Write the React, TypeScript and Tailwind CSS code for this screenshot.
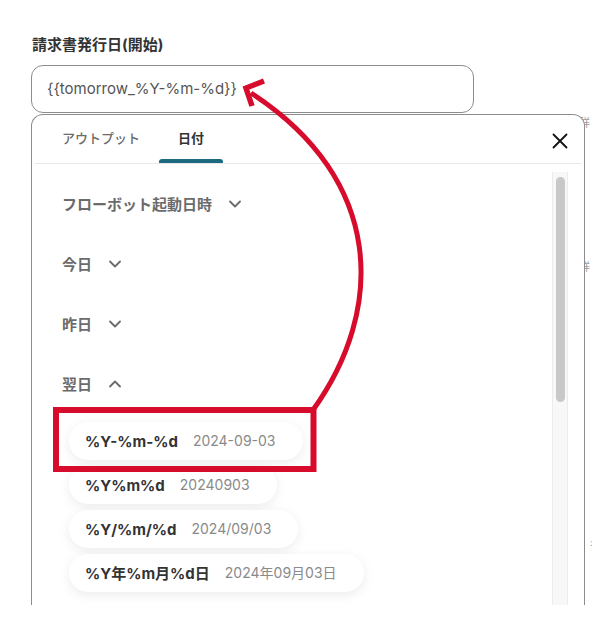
import React from "react";

const font = { fontFamily: 'Inter, "Noto Sans CJK JP", sans-serif' };

function Chevron({ up = false }: { up?: boolean }) {
  return (
    <svg width="12" height="8" viewBox="0 0 12 8" className="shrink-0">
      <path
        d={up ? "M1 6.5 L6 1.5 L11 6.5" : "M1 1.5 L6 6.5 L11 1.5"}
        fill="none"
        stroke="#6b6b6b"
        strokeWidth="1.8"
        strokeLinecap="round"
        strokeLinejoin="round"
      />
    </svg>
  );
}

function Section({ label, up = false }: { label: string; up?: boolean }) {
  return (
    <div className="h-[60px] flex items-center gap-[17px] pl-[30px]">
      <span className="text-[15px] font-semibold text-[#6b6b6b] leading-none">{label}</span>
      <Chevron up={up} />
    </div>
  );
}

function Pill({ fmt, ex }: { fmt: string; ex: string }) {
  return (
    <div className="self-start h-[38px] flex items-center gap-[15px] pl-[16px] pr-[27px] rounded-full bg-white shadow-[0_3px_12px_rgba(0,0,0,0.08)]">
      <span className="text-[15px] font-bold text-[#333333] leading-none">{fmt}</span>
      <span className="text-[14px] text-[#8a8a8a] leading-none">{ex}</span>
    </div>
  );
}

export default function App() {
  return (
    <div className="relative w-[610px] h-[629px] overflow-hidden bg-white" style={font}>
      {/* background fragments peeking out to the right of the panel */}
      <span className="absolute left-[579px] top-[118px] text-[11px] text-[#9a9a9a] leading-none">詳</span>
      <span className="absolute left-[579px] top-[262px] text-[11px] text-[#9a9a9a] leading-none">詳</span>
      <span className="absolute left-[590px] top-[538px] text-[9px] text-[#9a9a9a] leading-none">:</span>

      <div className="relative flex flex-col pl-[31px] pt-[35px]">
        <div className="pl-px h-[20px] flex items-center text-[15px] font-bold text-[#333333]">
          請求書発行日(開始)
        </div>
        <div className="mt-[10px] w-[443px] h-[48px] rounded-[12px] border border-[#8c8c8c] flex items-center pl-[15px] text-[15px] text-[#555555]">
          {"{{tomorrow_%Y-%m-%d}}"}
        </div>

        <div className="mt-px w-[554px] h-[491px] rounded-t-[12px] border-x border-t border-[#8c8c8c] bg-white flex flex-col overflow-hidden">
          {/* tabs */}
          <div className="h-[48px] flex items-stretch pl-[11px] pr-[16px]">
            <div className="flex flex-col px-[19px]">
              <div className="flex-1 flex items-center pt-[4px] text-[13px] font-medium text-[#6b6b6b]">アウトプット</div>
              <div className="h-[4px]" />
            </div>
            <div className="flex flex-col px-[19px] relative">
              <div className="flex-1 flex items-center pt-[4px] text-[13px] font-bold text-[#333333]">日付</div>
              <div className="h-[4px] -mx-[19px] rounded-t-[3px] bg-[#1b6a80]" />
            </div>
            <div className="flex-1" />
            <div className="flex items-center pt-[4px]">
              <svg width="16" height="16" viewBox="0 0 16 16">
                <path d="M1.5 1.5 L14.5 14.5 M14.5 1.5 L1.5 14.5" stroke="#111" strokeWidth="1.8" strokeLinecap="round" />
              </svg>
            </div>
          </div>
          <div className="mx-[3px] h-px bg-[#e8e8e8]" />

          {/* body */}
          <div className="flex-1 flex min-h-0">
            <div className="flex-1 flex flex-col pt-[10px]">
              <Section label="フローボット起動日時" />
              <Section label="今日" />
              <Section label="昨日" />
              <Section label="翌日" up />
              <div className="flex flex-col gap-[6px] pl-[37px] pt-[8px]">
                <Pill fmt="%Y-%m-%d" ex="2024-09-03" />
                <Pill fmt="%Y%m%d" ex="20240903" />
                <Pill fmt="%Y/%m/%d" ex="2024/09/03" />
                <Pill fmt="%Y年%m月%d日" ex="2024年09月03日" />
              </div>
            </div>
            <div className="mt-[8px] mr-[16px] w-[16px] bg-[#f8f8f8] border-x border-[#ececec] flex justify-center pt-[5px]">
              <div className="w-[9px] h-[225px] rounded-full bg-[#c8c8c8]" />
            </div>
          </div>
        </div>
      </div>

      {/* annotation overlay */}
      <svg className="absolute inset-0 pointer-events-none" width="610" height="629" viewBox="0 0 610 629">
        <rect x="56" y="410" width="257.5" height="59" fill="none" stroke="#d70c2c" strokeWidth="6" />
        <path d="M313 410 C 385 310 385 180 251 93" fill="none" stroke="#d70c2c" strokeWidth="5" />
        <polyline points="264,81 246,88 252,106" fill="none" stroke="#d70c2c" strokeWidth="5.5" strokeLinejoin="miter" />
      </svg>
    </div>
  );
}
